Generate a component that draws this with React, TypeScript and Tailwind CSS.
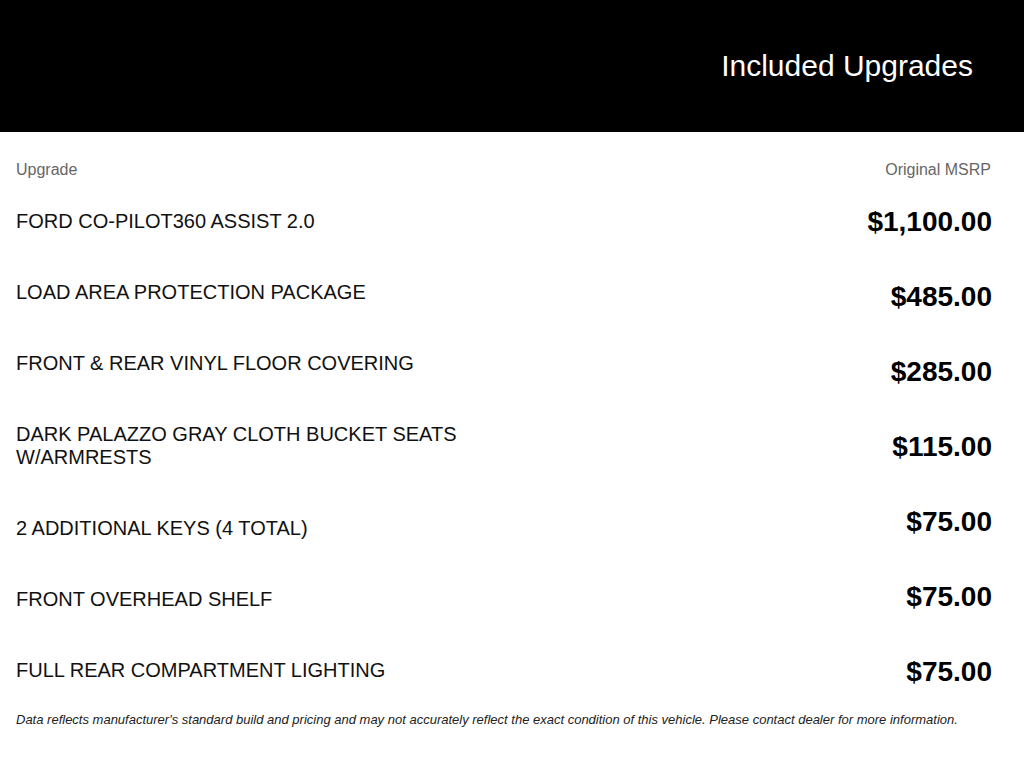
const upgrades = [
  "FORD CO-PILOT360 ASSIST 2.0",
  "LOAD AREA PROTECTION PACKAGE",
  "FRONT & REAR VINYL FLOOR COVERING",
  "DARK PALAZZO GRAY CLOTH BUCKET SEATS W/ARMRESTS",
  "2 ADDITIONAL KEYS (4 TOTAL)",
  "FRONT OVERHEAD SHELF",
  "FULL REAR COMPARTMENT LIGHTING",
];

const prices = ["$1,100.00", "$485.00", "$285.00", "$115.00", "$75.00", "$75.00", "$75.00"];

export default function App() {
  return (
    <div className="min-h-screen bg-white font-['Liberation_Sans',Arial,sans-serif]">
      <div className="h-[132px] bg-black flex items-center justify-end pr-[51px]">
        <h1 className="text-[30px] leading-[36px] text-white">Included Upgrades</h1>
      </div>

      <div className="px-4 pt-[26px]">
        <div className="flex justify-between pr-[17px] text-base leading-6 text-[#666]">
          <span>Upgrade</span>
          <span>Original MSRP</span>
        </div>

        <div className="flex justify-between">
          <div className="w-[480px] flex flex-col gap-12 pt-[27.5px]">
            {upgrades.map((u) => (
              <div key={u} className="text-[20px] leading-[23px] text-[#111]">
                {u}
              </div>
            ))}
          </div>
          <div className="flex flex-col items-end gap-[43px] pt-6 pr-4">
            {prices.map((p, i) => (
              <div key={i} className="text-[28px] leading-8 font-bold text-black">
                {p}
              </div>
            ))}
          </div>
        </div>

        <p className="mt-6 text-[13px] leading-[15px] italic text-[#222]">
          Data reflects manufacturer's standard build and pricing and may not accurately reflect the exact
          condition of this vehicle. Please contact dealer for more information.
        </p>
      </div>
    </div>
  );
}
